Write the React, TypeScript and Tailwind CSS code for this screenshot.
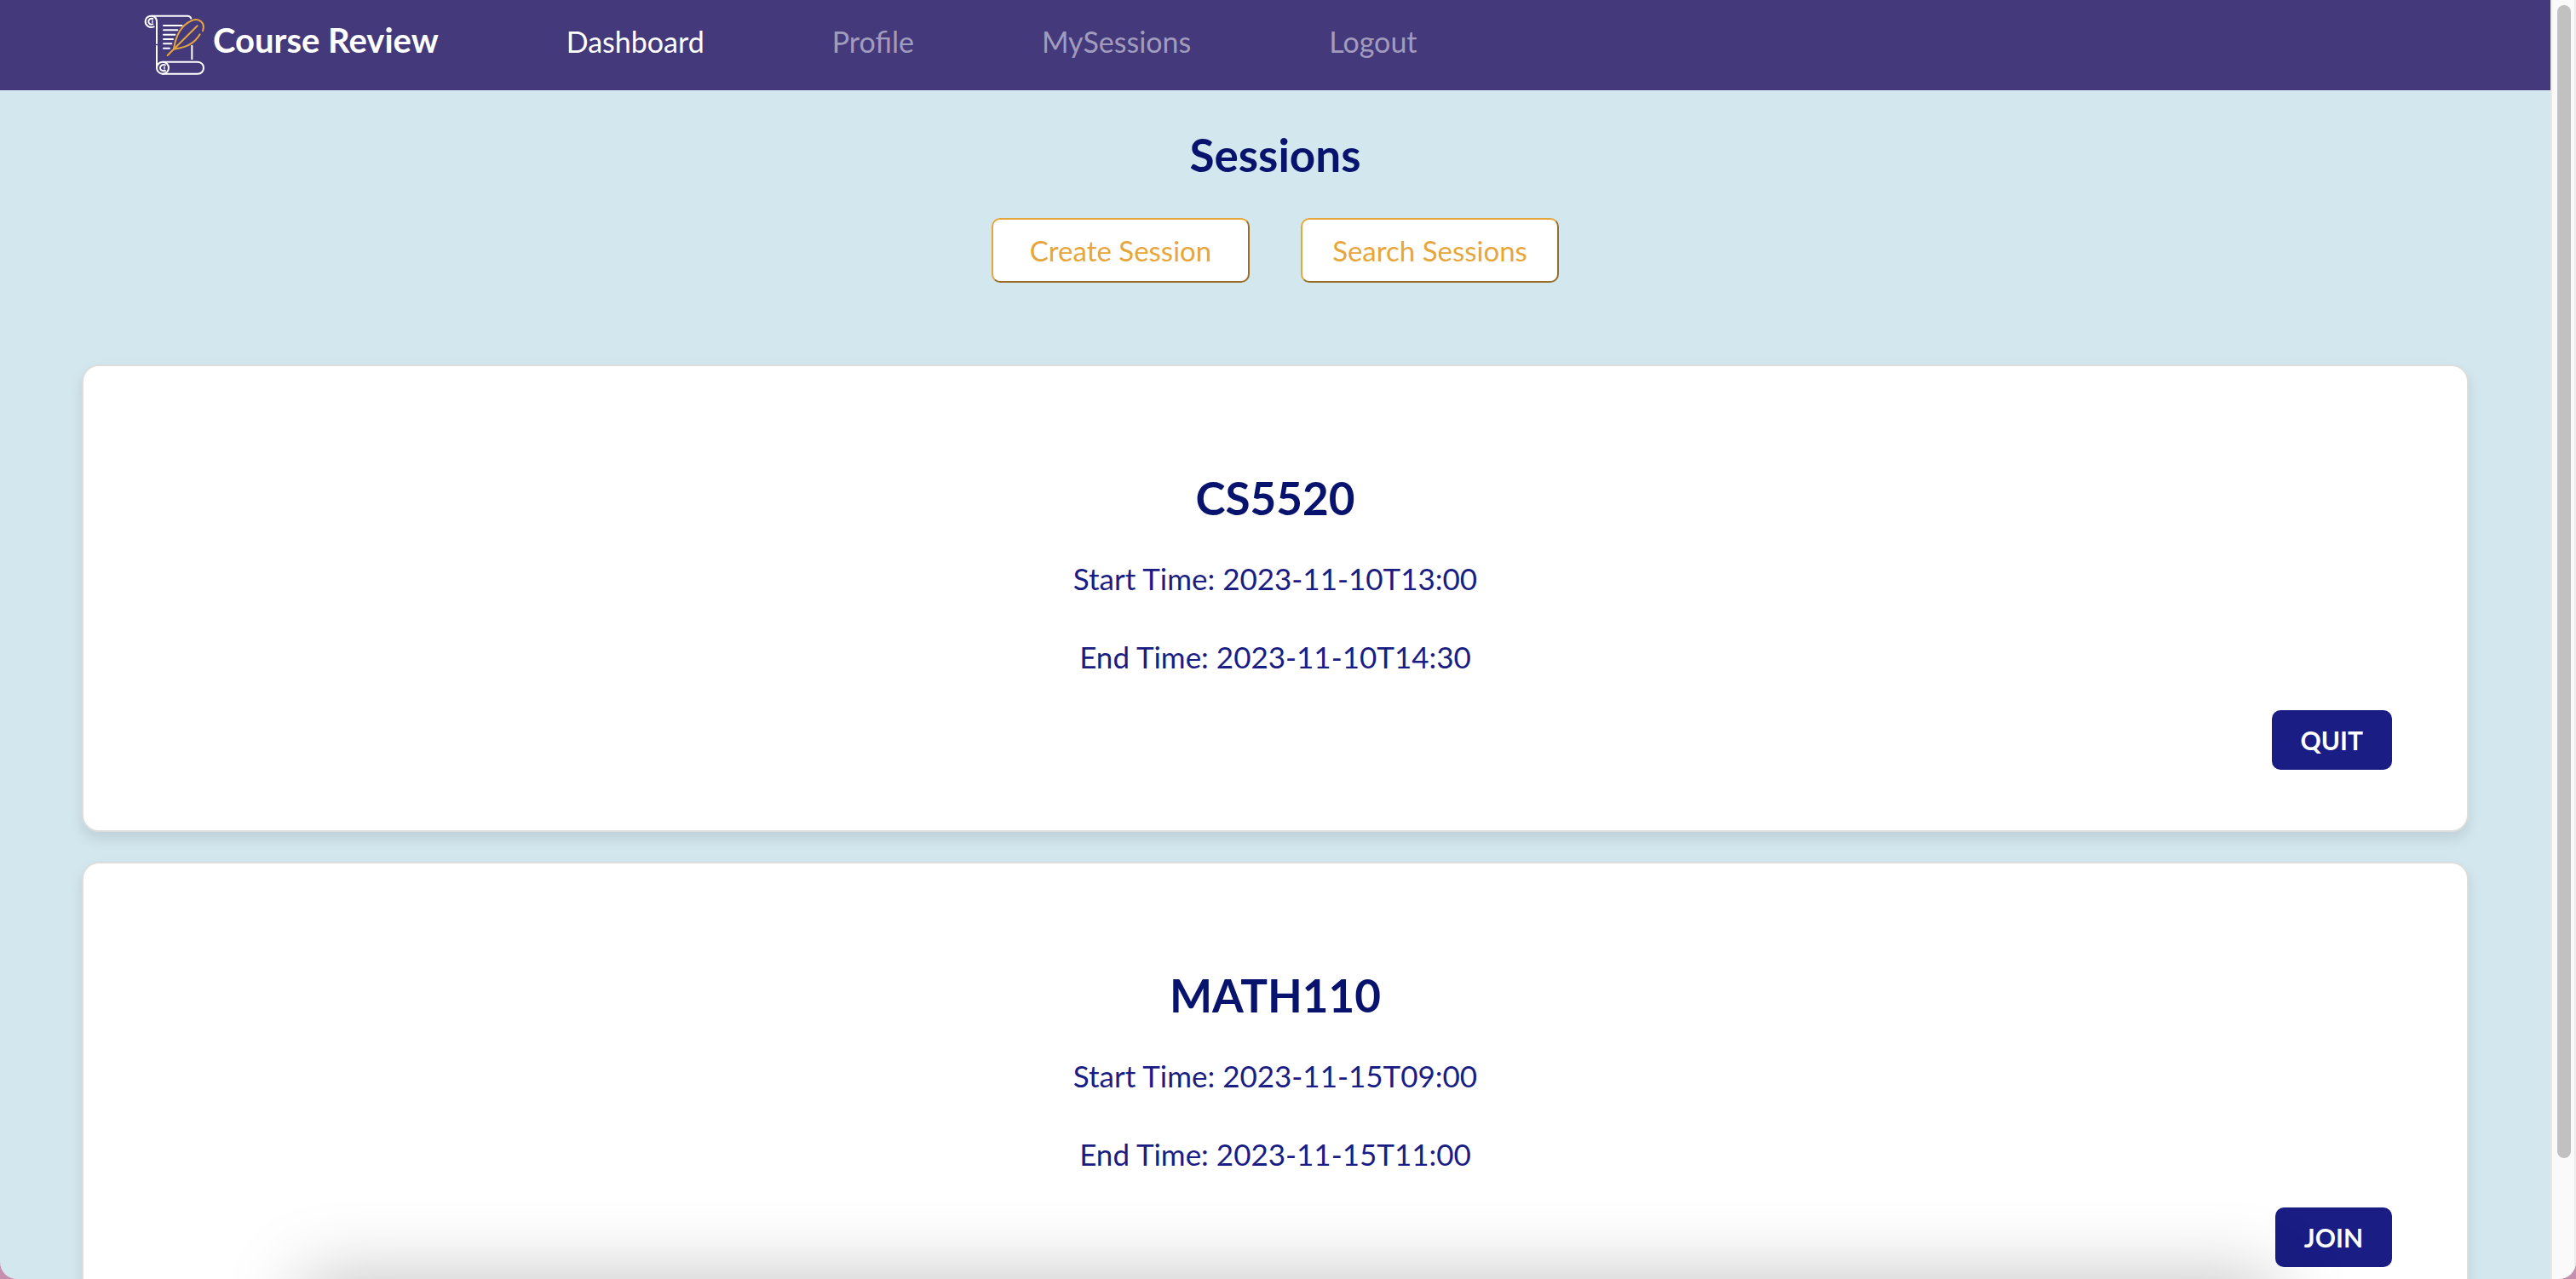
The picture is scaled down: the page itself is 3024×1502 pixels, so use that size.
type Session = { course: string; start: string; end: string; action: string };

const sessions: Session[] = [
  { course: "CS5520", start: "2023-11-10T13:00", end: "2023-11-10T14:30", action: "QUIT" },
  { course: "MATH110", start: "2023-11-15T09:00", end: "2023-11-15T11:00", action: "JOIN" },
];

function ScrollLogo() {
  return (
    <svg viewBox="52 46 222 222" className="size-[74px]" fill="none" strokeWidth="6" strokeLinecap="round" aria-hidden="true">
      <g stroke="#ffffff">
        <path d="M90 95C74 101 60 91 60 77C60 65 69 57 80 57H208C215 57 219 60 221 66" />
        <path d="M84 57C95 59 100 67 100 78V154" />
        <path d="M86 67C77 65 71 70 71 77C71 84 77 89 86 86" />
        <path d="M85 73V81" strokeWidth="4" />
        <path d="M100 163V240" />
        <path d="M224 160V211" strokeLinecap="butt" />
        <path d="M121 219H244C272 219 272 261 244 261H121" />
        <circle cx="121" cy="240" r="21" />
        <path d="M130 230C120 227 112 232 112 240C112 248 120 253 130 250" />
        <path d="M127 236V244" strokeWidth="4" />
        <path d="M124 91H189M124 107H173M124 123H164M124 139H157M124 155H152M124 171H145" />
      </g>
      <g stroke="#e7a63c">
        <path d="M138 196L243 92" />
        <path d="M160 174C166 132 184 91 222 74C250 62 272 82 262 110" />
        <path d="M160 174C200 170 234 154 252 122" />
      </g>
    </svg>
  );
}

function NavBar() {
  return (
    <nav className="flex h-[106px] items-center gap-[150px] bg-[#43397b] pb-0.5 pl-[168px]">
      <a href="#" className="flex items-center gap-2 text-[40px] leading-[48px] font-bold text-white">
        <ScrollLogo />
        <span className="-mt-2.5">Course Review</span>
      </a>
      <ul className="-mt-1.5 flex gap-[150px] text-[34px] leading-[48px] text-[#a19cbd]">
        <li>
          <a href="#" className="text-white">Dashboard</a>
        </li>
        <li>
          <a href="#">Profile</a>
        </li>
        <li>
          <a href="#">MySessions</a>
        </li>
        <li className="ml-3">
          <a href="#">Logout</a>
        </li>
      </ul>
    </nav>
  );
}

function OutlineButton({ label }: { label: string }) {
  return (
    <button
      type="button"
      className="h-[76px] w-[303px] rounded-[10px] border-2 border-t-[#e7a63c] border-r-[#996d28] border-b-[#996d28] border-l-[#e7a63c] bg-white text-[33px] leading-[48px] text-[#e7a63c]"
    >
      {label}
    </button>
  );
}

function SessionCard({ course, start, end, action }: Session) {
  return (
    <article className="flex flex-col items-center rounded-[20px] border-2 border-[#dddddd] bg-white px-[88px] pt-[123px] pb-[71px] shadow-[0_8px_16px_rgba(0,0,0,0.1)]">
      <h2 className="text-[53px] leading-[64px] font-bold text-[#07136d]">{course}</h2>
      <p className="mt-10 text-[35px] leading-[44px] text-[#191d84]">Start Time: {start}</p>
      <p className="mt-12 text-[35px] leading-[44px] text-[#191d84]">End Time: {end}</p>
      <button
        type="button"
        className="mt-[41px] h-[70px] self-end rounded-[10px] bg-[#191d84] px-[34px] text-[30px] leading-[40px] font-bold text-white"
      >
        {action}
      </button>
    </article>
  );
}

export default function App() {
  return (
    <div className="relative h-screen overflow-hidden bg-[#c68fad] font-['Lato',sans-serif]">
      <div className="flex h-full overflow-hidden rounded-b-[20px]">
        <div className="min-w-0 flex-1 bg-[#d3e7ef]">
          <NavBar />
          <main className="px-24 pt-11">
            <h1 className="text-center text-[53px] leading-[64px] font-bold text-[#07136d]">Sessions</h1>
            <div className="mt-[42px] flex justify-center gap-[60px]">
              <OutlineButton label="Create Session" />
              <OutlineButton label="Search Sessions" />
            </div>
            <div className="mt-24 flex flex-col gap-[35px]">
              {sessions.map((session) => (
                <SessionCard key={session.course} {...session} />
              ))}
            </div>
          </main>
        </div>
        <div className="w-[30px] border-r-2 border-l-2 border-r-[#ededed] border-l-[#e8e8e8] bg-[#fafafa] pt-1.5 pb-[142px] pl-1.5">
          <div className="h-full w-4 rounded-full bg-[#c1c1c1]" />
        </div>
      </div>
      <div className="pointer-events-none absolute inset-x-[356px] top-full h-40 shadow-[0_0_88px_rgba(0,0,0,0.25)]" />
    </div>
  );
}
